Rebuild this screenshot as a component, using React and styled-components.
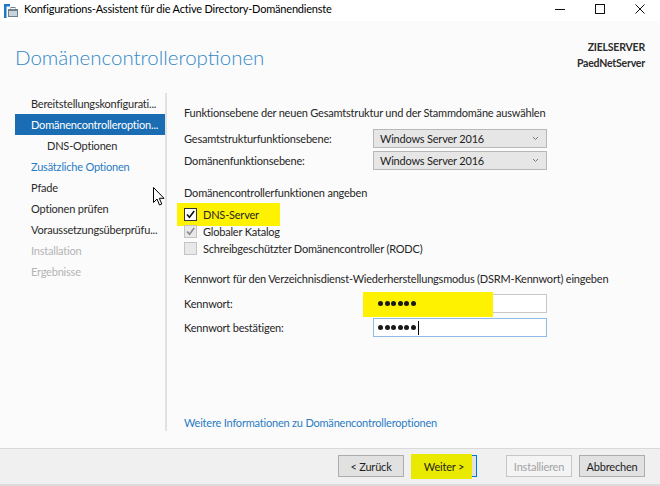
import React from "react";
import styled, { createGlobalStyle } from "styled-components";

const Global = createGlobalStyle`
  html, body { margin: 0; padding: 0; }
  body {
    width: 660px; height: 486px; overflow: hidden;
    font-family: Lato, "Noto Sans", sans-serif;
    font-size: 11px; letter-spacing: -0.2px; color: #1e1e1e;
  }
`;

const Window = styled.div`
  position: relative;
  width: 660px; height: 486px;
  display: flex; flex-direction: column;
  background: #fbfbfb;
`;

const TitleBar = styled.div`
  height: 21px; flex: none;
  background: #fff;
  display: flex; align-items: center;
  padding-left: 4px;
`;
const TitleText = styled.span`
  margin-left: 6px; font-size: 11px; color: #000; flex: 1;
  line-height: 16px; margin-top: -3px;
`;
const Controls = styled.div`
  display: flex; align-items: center; height: 21px; margin-top: -4px;
`;
const Ctrl = styled.div`
  width: 40px; height: 21px; display: flex; align-items: center; justify-content: center;
`;

const Header = styled.div`
  height: 72px; flex: none;
  display: flex; justify-content: space-between; align-items: flex-start;
  padding: 0 15px;
`;
const Heading = styled.h1`
  margin: 21px 0 0 0;
  font-family: Lato, "Noto Sans", sans-serif;
  font-weight: 300; font-size: 20.5px; line-height: 30px; letter-spacing: 0;
  color: #3089c8;
`;
const ServerInfo = styled.div`
  margin-top: 18px; text-align: right;
  font-weight: 700; font-size: 10.5px; line-height: 16px; color: #2b2b2b;
`;

const Main = styled.div`
  flex: 1; display: flex; padding-bottom: 17px; min-height: 0;
`;
const Nav = styled.div`
  margin-left: 15px; width: 150px; flex: none;
  border-right: 2px solid #e2e2e2;
  display: flex; flex-direction: column;
`;
const NavItem = styled.div`
  height: 21px; line-height: 21px;
  padding-left: ${p => (p.$sub ? 32 : 16)}px;
  white-space: nowrap;
  background: ${p => (p.$active ? "#1a6db3" : "transparent")};
  color: ${p => p.$active ? "#fff" : p.$tone === "link" ? "#2a7cc4" : p.$tone === "off" ? "#b4b4b4" : "#2a2a2a"};
`;

const Content = styled.div`
  flex: 1; padding: 12px 0 0 17px;
  display: flex; flex-direction: column;
`;
const SectionTitle = styled.div`
  line-height: 16px; margin-top: ${p => p.$mt || 0}px;
  color: #262626;
`;
const FormGrid = styled.div`
  display: grid; grid-template-columns: 189px 174px;
  row-gap: ${p => p.$gap}px; margin-top: ${p => p.$mt}px;
  align-items: center;
`;
const Label = styled.div`
  color: #262626; line-height: 16px;
`;
const Select = styled.div`
  height: 19px; box-sizing: border-box;
  background: #e6e6e6; border: 1px solid #b8b8b8;
  display: flex; align-items: center; justify-content: space-between;
  padding: 0 7px 0 6px; color: #1e1e1e;
`;
const Input = styled.div`
  position: relative;
  height: 19px; box-sizing: border-box;
  background: #fff; border: 1px solid ${p => (p.$focus ? "#8fb9e6" : "#c8c8c8")};
  display: flex; align-items: center; padding-left: 4px; gap: 1.5px;
`;
const Dot = styled.span`
  position: relative; z-index: 1;
  width: 5px; height: 5px; border-radius: 50%; background: #1a1a1a;
`;
const Caret = styled.span`
  display: inline-block; width: 1px; height: 14px; background: #000; margin-left: 1px;
`;

const CheckList = styled.div`
  margin-top: 5px; display: flex; flex-direction: column;
`;
const CheckRow = styled.div`
  position: relative;
  height: 17px; display: flex; align-items: center; gap: 6px;
`;
const Box = styled.span`
  position: relative; z-index: 1;
  width: 13px; height: 13px; box-sizing: border-box; flex: none;
  border: 1px solid ${p => (p.$disabled ? "#c4c4c4" : "#333")};
  background: ${p => (p.$disabled ? "#e8e8e8" : "#fff")};
  display: flex; align-items: center; justify-content: center;
`;
const CheckText = styled.span`
  position: relative; z-index: 1; color: #262626; line-height: 16px;
`;

const Highlight = styled.div`
  position: absolute; background: #fff200; z-index: 0;
`;

const Link = styled.div`
  margin-top: auto; line-height: 16px; color: #2a7cc4;
`;

const Footer = styled.div`
  height: 38px; flex: none; box-sizing: border-box;
  border-top: 1px solid #d9d9d9; border-bottom: 2px solid #dcdcdc;
  background: #f0f0f0;
  display: flex; justify-content: flex-end; align-items: flex-start;
  padding: 6px 15px 0 0;
`;
const Button = styled.div`
  position: relative;
  width: 66px; height: 22px; box-sizing: border-box;
  margin-left: ${p => p.$ml}px;
  display: flex; align-items: center; justify-content: center;
  border: 1px solid ${p => (p.$primary ? "#0078d7" : p.$disabled ? "#c6c6c6" : "#adadad")};
  background: ${p => (p.$disabled ? "#f4f4f4" : "#e1e1e1")};
  color: ${p => (p.$disabled ? "#a3a3a3" : "#1e1e1e")};
`;
const ButtonLabel = styled.span`
  position: relative; z-index: 1;
`;

const Cursor = styled.svg`
  position: absolute; left: 153px; top: 187px;
`;

const Chevron = () => (
  <svg width="7" height="5" viewBox="0 0 7 5">
    <path d="M1 1 L3.5 3.5 L6 1" fill="none" stroke="#777" strokeWidth="1" />
  </svg>
);

const Tick = ({ color }) => (
  <svg width="11" height="11" viewBox="0 0 11 11">
    <path d="M2 5.5 L4.5 8.2 L9.2 2" fill="none" stroke={color} strokeWidth="1.6" />
  </svg>
);

const Dots = ({ n }) => Array.from({ length: n }, (_, i) => <Dot key={i} />);

export default function App() {
  return (
    <Window>
      <Global />
      <TitleBar>
        <svg width="14" height="14" viewBox="0 0 14 14">
          <rect x="0" y="0" width="2.5" height="14" fill="#1e78c8" />
          <rect x="0" y="0" width="6" height="2.5" fill="#1e78c8" />
          <rect x="4" y="5" width="10" height="8" fill="#6e7f8c" />
          <rect x="5" y="7" width="8" height="5" fill="#c9d3da" />
          <rect x="7" y="3.5" width="4" height="2" fill="none" stroke="#6e7f8c" strokeWidth="1" />
        </svg>
        <TitleText>Konfigurations-Assistent für die Active Directory-Domänendienste</TitleText>
        <Controls>
          <Ctrl>
            <svg width="10" height="10" viewBox="0 0 10 10"><path d="M0 5.5 H10" stroke="#111" strokeWidth="1" /></svg>
          </Ctrl>
          <Ctrl>
            <svg width="10" height="10" viewBox="0 0 10 10"><rect x="0.5" y="0.5" width="9" height="9" fill="none" stroke="#111" strokeWidth="1" /></svg>
          </Ctrl>
          <Ctrl>
            <svg width="10" height="10" viewBox="0 0 10 10"><path d="M0.5 0.5 L9.5 9.5 M9.5 0.5 L0.5 9.5" stroke="#111" strokeWidth="1" /></svg>
          </Ctrl>
        </Controls>
      </TitleBar>

      <Header>
        <Heading>Domänencontrolleroptionen</Heading>
        <ServerInfo>
          ZIELSERVER<br />PaedNetServer
        </ServerInfo>
      </Header>

      <Main>
        <Nav>
          <NavItem>Bereitstellungskonfigurati...</NavItem>
          <NavItem $active>Domänencontrolleroption...</NavItem>
          <NavItem $sub>DNS-Optionen</NavItem>
          <NavItem $tone="link">Zusätzliche Optionen</NavItem>
          <NavItem>Pfade</NavItem>
          <NavItem>Optionen prüfen</NavItem>
          <NavItem>Voraussetzungsüberprüfu...</NavItem>
          <NavItem $tone="off">Installation</NavItem>
          <NavItem $tone="off">Ergebnisse</NavItem>
        </Nav>

        <Content>
          <SectionTitle>Funktionsebene der neuen Gesamtstruktur und der Stammdomäne auswählen</SectionTitle>
          <FormGrid $gap={3} $mt={8}>
            <Label>Gesamtstrukturfunktionsebene:</Label>
            <Select>Windows Server 2016<Chevron /></Select>
            <Label>Domänenfunktionsebene:</Label>
            <Select>Windows Server 2016<Chevron /></Select>
          </FormGrid>

          <SectionTitle $mt={15}>Domänencontrollerfunktionen angeben</SectionTitle>
          <CheckList>
            <CheckRow>
              <Highlight style={{ left: -7, top: -3, width: 103, height: 23 }} />
              <Box><Tick color="#111" /></Box>
              <CheckText>DNS-Server</CheckText>
            </CheckRow>
            <CheckRow>
              <Box $disabled><Tick color="#8a8a8a" /></Box>
              <CheckText>Globaler Katalog</CheckText>
            </CheckRow>
            <CheckRow>
              <Box $disabled />
              <CheckText>Schreibgeschützter Domänencontroller (RODC)</CheckText>
            </CheckRow>
          </CheckList>

          <SectionTitle $mt={14}>Kennwort für den Verzeichnisdienst-Wiederherstellungsmodus (DSRM-Kennwort) eingeben</SectionTitle>
          <FormGrid $gap={5} $mt={7}>
            <Label>Kennwort:</Label>
            <Input>
              <Highlight style={{ left: -11, top: -3, width: 130, height: 25 }} />
              <Dots n={6} />
            </Input>
            <Label>Kennwort bestätigen:</Label>
            <Input $focus>
              <Dots n={6} /><Caret />
            </Input>
          </FormGrid>

          <Link>Weitere Informationen zu Domänencontrolleroptionen</Link>
        </Content>
      </Main>

      <Footer>
        <Button $ml={0}><ButtonLabel>&lt; Zurück</ButtonLabel></Button>
        <Button $ml={7} $primary>
          <Highlight style={{ left: -1, top: -2, width: 61, height: 25, background: "#eaea00" }} />
          <ButtonLabel>Weiter &gt;</ButtonLabel>
        </Button>
        <Button $ml={29} $disabled><ButtonLabel>Installieren</ButtonLabel></Button>
        <Button $ml={7}><ButtonLabel>Abbrechen</ButtonLabel></Button>
      </Footer>

      <Cursor width="13" height="20" viewBox="0 0 13 20">
        <path d="M0.5 0.5 L0.5 15.5 L4 12 L6.5 18 L8.8 17 L6.3 11.3 L11 11.3 Z" fill="#fff" stroke="#000" strokeWidth="1" />
      </Cursor>
    </Window>
  );
}
